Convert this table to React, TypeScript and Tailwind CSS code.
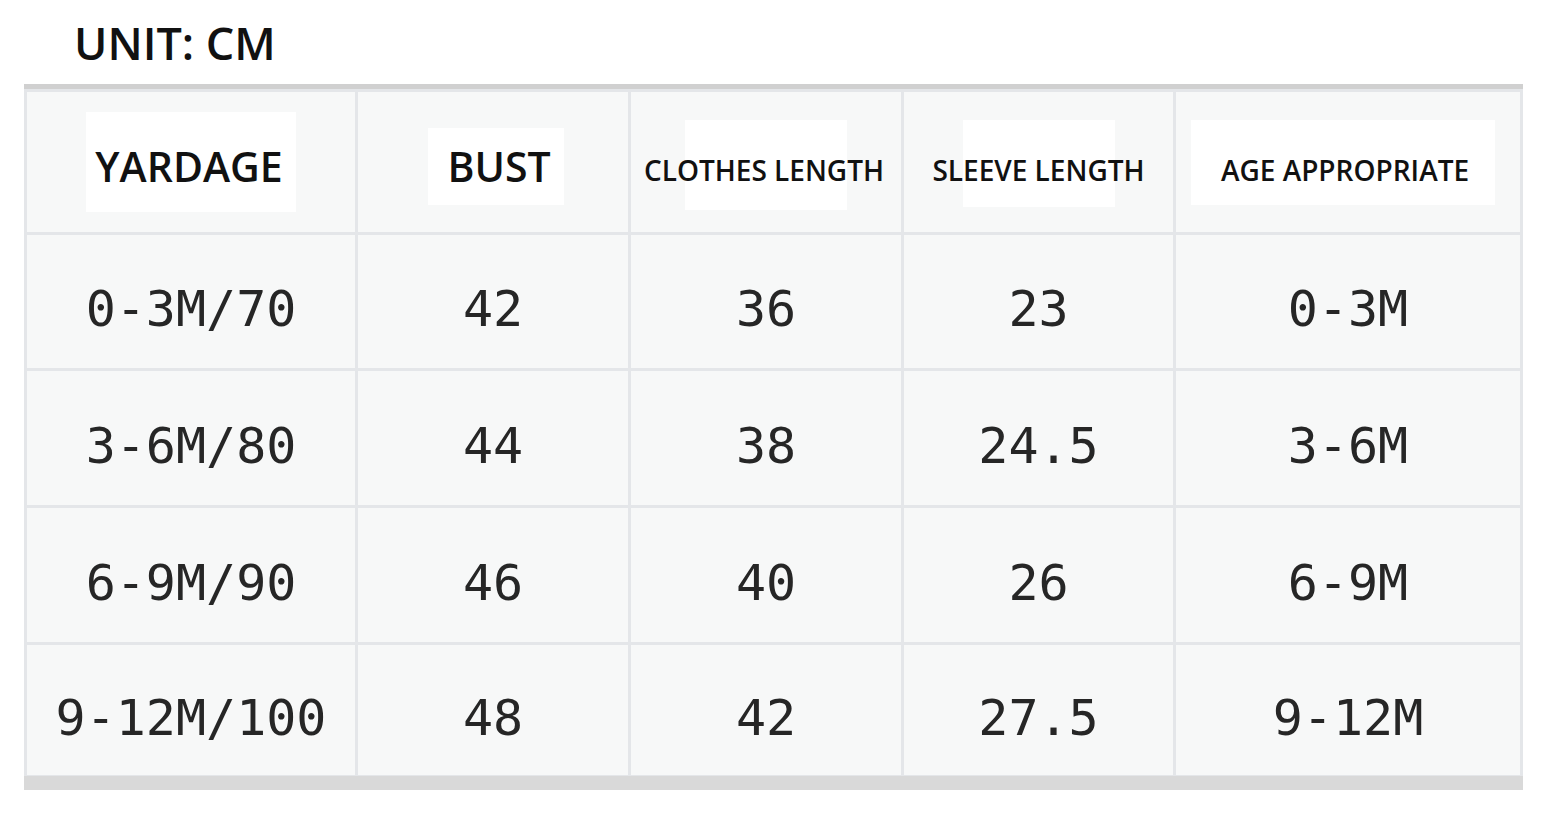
import React from "react";

const headers = [
  { label: "YARDAGE", size: "text-[41px] pt-[10px] mr-[4px]", box: "w-[210px] h-[100px]" },
  { label: "BUST", size: "text-[41px] pt-[10px] ml-[12px]", box: "w-[136px] h-[77px] mt-[8px] ml-[6px]" },
  { label: "CLOTHES LENGTH", size: "text-[28px] pt-[16px] mr-[4px]", box: "w-[162px] h-[90px] mt-[6px]" },
  { label: "SLEEVE LENGTH", size: "text-[28px] pt-[16px]", box: "w-[152px] h-[87px] mt-[3px]" },
  { label: "AGE APPROPRIATE", size: "text-[28px] pt-[16px] mr-[6px]", box: "w-[304px] h-[85px] mr-[10px]" },
];

const rows = [
  ["0-3M/70", "42", "36", "23", "0-3M"],
  ["3-6M/80", "44", "38", "24.5", "3-6M"],
  ["6-9M/90", "46", "40", "26", "6-9M"],
  ["9-12M/100", "48", "42", "27.5", "9-12M"],
];

const rowHeights = ["h-[133px]", "h-[134px]", "h-[134px]", "h-[130px]"];

export default function App() {
  return (
    <div className="w-[1548px] h-[814px] bg-white overflow-hidden">
      <div
        className="pl-[74px] pt-[20px] h-[84px] text-[45px] leading-[45px] font-semibold text-[#111]"
        style={{ fontFamily: '"Open Sans", sans-serif' }}
      >
        UNIT: CM
      </div>
      <div className="ml-[24px] w-[1499px] border-t-[5px] border-t-[#d0d0d0] border-b-[14px] border-b-[#d9d9d9]">
        <div className="grid grid-cols-[328px_270px_270px_269px_344px] gap-[3px] p-[3px] pb-[1px] bg-[#e4e6e9]">
          {headers.map((h) => (
            <div
              key={h.label}
              className="h-[140px] bg-[#f7f8f8] grid place-items-center"
            >
              <div className={`[grid-area:1/1] bg-white ${h.box}`} />
              <div
                className={`[grid-area:1/1] ${h.size} font-semibold text-[#111] whitespace-nowrap`}
                style={{ fontFamily: '"Open Sans", sans-serif' }}
              >
                {h.label}
              </div>
            </div>
          ))}
          {rows.map((r, ri) =>
            r.map((c, ci) => (
              <div
                key={ri + "-" + ci}
                className={`${rowHeights[ri]} bg-[#f7f8f8] flex items-center justify-center pt-[16px] text-[50px] text-[#262626]`}
                style={{ fontFamily: '"DejaVu Sans Mono", monospace' }}
              >
                {c}
              </div>
            ))
          )}
        </div>
      </div>
    </div>
  );
}
